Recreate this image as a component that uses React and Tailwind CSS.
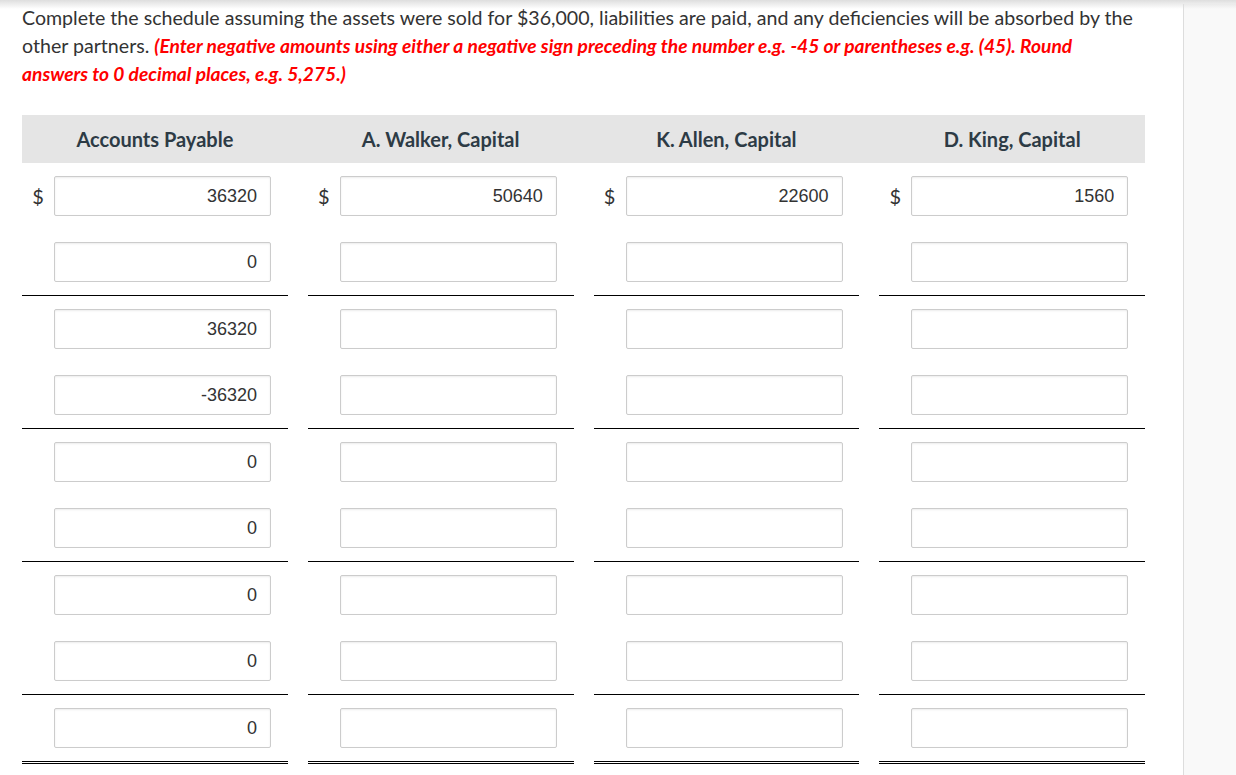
import React from 'react';

const columns = [
  { title: 'Accounts Payable', values: ['36320', '0', '36320', '-36320', '0', '0', '0', '0', '0'] },
  { title: 'A. Walker, Capital', values: ['50640', '', '', '', '', '', '', '', ''] },
  { title: 'K. Allen, Capital', values: ['22600', '', '', '', '', '', '', '', ''] },
  { title: 'D. King, Capital', values: ['1560', '', '', '', '', '', '', '', ''] },
];

// which rows close with a rule under them
const ruleAfter = { 1: 'single', 3: 'single', 5: 'single', 7: 'single', 8: 'double' };

function Cell({ value, showDollar, rule }) {
  const ruleClass =
    rule === 'single'
      ? 'border-b border-black'
      : rule === 'double'
      ? 'border-b-[3px] border-double border-black'
      : '';
  return (
    <div className={`flex items-center py-[13px] ${ruleClass}`}>
      <span className="w-8 text-center text-[20px] text-[#333]">{showDollar ? '$' : ''}</span>
      <input
        readOnly
        defaultValue={value}
        className="w-[217px] h-[40px] border border-[#cccccc] rounded-[2px] bg-white shadow-[inset_0_1px_2px_rgba(0,0,0,0.08)] text-right pr-[13px] text-[18px] text-[#333] font-['Liberation_Sans',Arial,sans-serif] outline-none"
      />
    </div>
  );
}

export default function App() {
  return (
    <div className="relative min-h-screen flex bg-white font-['Lato',sans-serif]">
      <div className="pointer-events-none absolute inset-x-0 top-0 h-[9px] bg-gradient-to-b from-[#dedede] to-transparent" />

      <main className="w-[1183px] pl-[22px] pt-[4px]">
        <p className="w-[1116px] text-[19.6px] leading-[28px] text-[#333]">
          Complete the schedule assuming the assets were sold for $36,000, liabilities are paid, and any deficiencies will be absorbed by the other partners.{' '}
          <span className="font-bold italic text-[#f00] text-[19.2px]">
            (Enter negative amounts using either a negative sign preceding the number e.g. -45 or parentheses e.g. (45). Round answers to 0 decimal places, e.g. 5,275.)
          </span>
        </p>

        <div className="mt-[27px] w-[1123px]">
          {/* header */}
          <div className="grid grid-cols-4 gap-x-5 bg-[#e5e5e5] h-[48px] items-center">
            {columns.map((c) => (
              <div key={c.title} className="text-center text-[20px] font-bold text-[#2d3b45]">
                {c.title}
              </div>
            ))}
          </div>

          {/* body */}
          <div className="grid grid-cols-4 gap-x-5">
            {columns.map((c) => (
              <div key={c.title} className="flex flex-col">
                {c.values.map((v, i) => (
                  <Cell key={i} value={v} showDollar={i === 0} rule={ruleAfter[i]} />
                ))}
              </div>
            ))}
          </div>
        </div>
      </main>

      <aside className="flex-1 bg-[#f9f9f9] border-l border-[#dddddd] mt-[4px]" />
    </div>
  );
}
